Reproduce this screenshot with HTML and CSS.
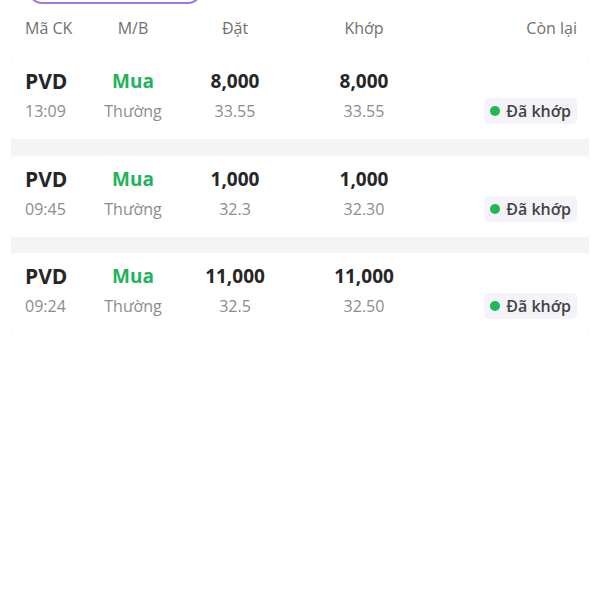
FILE: index.html
```html
<!DOCTYPE html>
<html lang="vi">
<head>
  <meta charset="UTF-8">
  <meta name="viewport" content="width=device-width, initial-scale=1.0">
  <title>Sổ lệnh</title>
  <link rel="stylesheet" href="styles.css">
</head>
<body>
  <div class="tabs">
    <div class="tab-pill"></div>
  </div>

  <div class="order-head">
    <span>Mã CK</span>
    <span class="center">M/B</span>
    <span class="center">Đặt</span>
    <span class="center">Khớp</span>
    <span class="right">Còn lại</span>
  </div>

  <div class="order-list">
    <div class="order-card">
      <div class="cell">
        <span class="symbol">PVD</span>
        <span class="sub">13:09</span>
      </div>
      <div class="cell center">
        <span class="side-buy">Mua</span>
        <span class="sub">Thường</span>
      </div>
      <div class="cell center">
        <span class="qty">8,000</span>
        <span class="sub">33.55</span>
      </div>
      <div class="cell center">
        <span class="qty">8,000</span>
        <span class="sub">33.55</span>
      </div>
      <div class="cell right">
        <span class="qty"></span>
        <span class="status"><i class="dot"></i>Đã khớp</span>
      </div>
    </div>

    <div class="order-card">
      <div class="cell">
        <span class="symbol">PVD</span>
        <span class="sub">09:45</span>
      </div>
      <div class="cell center">
        <span class="side-buy">Mua</span>
        <span class="sub">Thường</span>
      </div>
      <div class="cell center">
        <span class="qty">1,000</span>
        <span class="sub">32.3</span>
      </div>
      <div class="cell center">
        <span class="qty">1,000</span>
        <span class="sub">32.30</span>
      </div>
      <div class="cell right">
        <span class="qty"></span>
        <span class="status"><i class="dot"></i>Đã khớp</span>
      </div>
    </div>

    <div class="order-card">
      <div class="cell">
        <span class="symbol">PVD</span>
        <span class="sub">09:24</span>
      </div>
      <div class="cell center">
        <span class="side-buy">Mua</span>
        <span class="sub">Thường</span>
      </div>
      <div class="cell center">
        <span class="qty">11,000</span>
        <span class="sub">32.5</span>
      </div>
      <div class="cell center">
        <span class="qty">11,000</span>
        <span class="sub">32.50</span>
      </div>
      <div class="cell right">
        <span class="qty"></span>
        <span class="status"><i class="dot"></i>Đã khớp</span>
      </div>
    </div>
  </div>
</body>
</html>
```

FILE: styles.css
```css
body {
  font-family: "Open Sans", "Noto Sans", sans-serif;
  margin: 0;
  background-color: #fff;
  color: #262626;
}
.tabs {
  height: 4px;
  overflow: hidden;
  display: flex;
  align-items: flex-end;
  padding-left: 28px;
}
.tab-pill {
  flex-shrink: 0;
  width: 174px;
  height: 30px;
  border: 2px solid #a275e4;
  border-radius: 14px;
  box-sizing: border-box;
}
.order-head,
.order-card {
  display: grid;
  grid-template-columns: 70px 76px 128px 130px 148px;
}
.order-head {
  margin: 12px 11px 18px;
  padding: 0 11px 0 14px;
  font-size: 16px;
  line-height: 24px;
  color: #707070;
}
.center {
  text-align: center;
}
.right {
  text-align: right;
}
.order-list {
  margin: 0 11px;
  background-color: #f4f4f4;
}
.order-card {
  background-color: #fff;
  border-radius: 4px;
  padding: 10px 11px 16px 14px;
  margin-bottom: 16.5px;
}
.cell {
  display: flex;
  flex-direction: column;
  gap: 5px;
}
.cell.center {
  align-items: center;
}
.cell.right {
  align-items: flex-end;
}
.symbol {
  font-size: 21px;
  font-weight: 700;
  line-height: 26px;
  height: 26px;
}
.qty,
.side-buy {
  font-size: 19px;
  font-weight: 700;
  line-height: 26px;
  height: 26px;
}
.side-buy {
  color: #1fb35b;
}
.sub {
  font-size: 16px;
  line-height: 24px;
  color: #8c8c8c;
}
.status {
  display: flex;
  align-items: center;
  height: 26px;
  margin: -1px 0 -1px;
  padding: 0 6px;
  background-color: #f3f3f8;
  border-radius: 5px;
  font-size: 16px;
  font-weight: 600;
  color: #444;
}
.dot {
  width: 10px;
  height: 10px;
  border-radius: 50%;
  background-color: #1db954;
  margin-right: 6px;
}
```
